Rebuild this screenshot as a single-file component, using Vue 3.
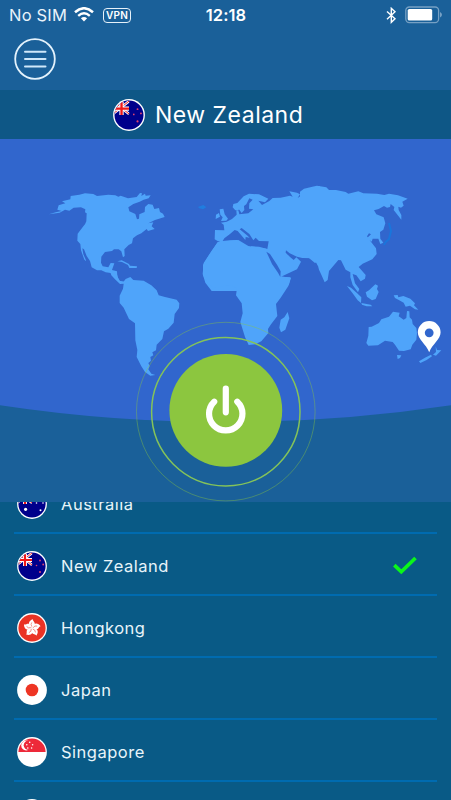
<script setup>
const countries = [
  { name: 'Australia', flag: 'au' },
  { name: 'New Zealand', flag: 'nz', selected: true },
  { name: 'Hongkong', flag: 'hk' },
  { name: 'Japan', flag: 'jp' },
  { name: 'Singapore', flag: 'sg' },
  { name: '', flag: 'none' }
]
const petals = [0, 72, 144, 216, 288]
</script>

<template>
  <svg class="defs" width="0" height="0">
    <defs>
      <clipPath id="disc"><circle cx="15" cy="15" r="13.6" /></clipPath>
      <g id="union">
        <rect width="15" height="14" fill="#00008b" />
        <path d="M0 2 15 14M0 14 15 2" stroke="#fff" stroke-width="2.4" />
        <path d="M0 2 15 14M0 14 15 2" stroke="#f01818" stroke-width=".9" />
        <path d="M8 0V15M0 9H15" stroke="#fff" stroke-width="4" />
        <path d="M8 0V15M0 9H15" stroke="#f01818" stroke-width="2.2" />
      </g>
      <g id="flag-nz">
        <rect width="30" height="30" fill="#00008b" />
        <svg width="15.5" height="15.5"><use href="#union" /></svg>
        <g fill="#e0426f"><circle cx="19.5" cy="14.5" r=".8" /><circle cx="23" cy="9.5" r=".9" /><circle cx="26.2" cy="13.5" r=".9" /><circle cx="23" cy="21" r="1" /></g>
      </g>
      <g id="flag-au">
        <rect width="30" height="30" fill="#00008b" />
        <svg width="15" height="15.5"><use href="#union" /></svg>
        <g fill="#fff"><circle cx="8.6" cy="20.3" r="1.6" /><circle cx="23" cy="8" r="1" /><circle cx="19.5" cy="14" r=".8" /><circle cx="26" cy="14" r=".8" /><circle cx="23.5" cy="21.2" r="1" /></g>
      </g>
      <g id="flag-hk">
        <rect width="30" height="30" fill="#ea3325" />
        <g v-for="a in petals" :key="a" :transform="`rotate(${a} 15 15)`">
          <path d="M15 15C10 12 11.5 7.5 16 6.3C15.5 8 18.3 9 17.8 11.4C17.6 13.3 16 13.4 15 15Z" fill="#fff" />
          <path d="M15 13.8Q13.2 11.6 14.8 9.4" fill="none" stroke="#ea3325" stroke-width=".5" />
        </g>
      </g>
      <g id="flag-jp"><rect width="30" height="30" fill="#fff" /><circle cx="15" cy="15" r="6.3" fill="#ee3524" /></g>
      <g id="flag-sg">
        <rect width="30" height="30" fill="#fff" /><rect width="30" height="15" fill="#ed2939" />
        <circle cx="9.2" cy="8.5" r="5" fill="#fff" /><circle cx="11.4" cy="8.3" r="4.7" fill="#ed2939" />
        <g fill="#fff"><circle cx="12.7" cy="5.3" r=".8" /><circle cx="9.8" cy="7.7" r=".8" /><circle cx="15.6" cy="7.7" r=".8" /><circle cx="10.8" cy="11" r=".8" /><circle cx="14.6" cy="11" r=".8" /></g>
      </g>
      <g id="flag-none"><rect width="30" height="30" fill="#fff" /></g>
    </defs>
  </svg>

  <main class="app">
    <header class="top">
      <div class="status">
        <div class="side">
          <span class="carrier">No SIM</span>
          <svg class="wifi" width="20" height="15" viewBox="0 0 20 15">
            <path d="M1 5.3Q10 -2.8 19 5.3" fill="none" stroke="#fff" stroke-width="2.5" />
            <path d="M4.2 8.8Q10 3.8 15.8 8.8" fill="none" stroke="#fff" stroke-width="2.4" />
            <path d="M6.9 11.3Q10 8.8 13.1 11.3L10 14.4Z" fill="#fff" />
          </svg>
          <span class="vpn">VPN</span>
        </div>
        <span class="clock">12:18</span>
        <div class="side right">
          <svg width="11" height="17" viewBox="0 0 11 17"><path d="M1 4.5 9 11.8 5.3 15.3V1.3L9 4.8 1 12.2" fill="none" stroke="#fff" stroke-width="1.4" /></svg>
          <svg width="38" height="18" viewBox="0 0 38 18">
            <rect x=".8" y="1" width="32.8" height="15.6" rx="3.5" fill="none" stroke="#76a0c4" stroke-width="1.3" />
            <rect x="2.7" y="3" width="24.5" height="11.6" rx="1.6" fill="#fff" />
            <path d="M35 6Q37 7 37 8.8T35 11.6Z" fill="#76a0c4" />
          </svg>
        </div>
      </div>
      <button class="menu" aria-label="Menu">
        <svg width="42" height="42" viewBox="0 0 42 42" fill="none">
          <circle cx="21" cy="21" r="19.8" stroke="#e3f2fc" stroke-width="1.8" />
          <path d="M11 13.7H31.5M11 21H31.5M11 28.4H31.5" stroke="#cfe8fa" stroke-width="2" stroke-linecap="round" />
        </svg>
      </button>
    </header>

    <div class="current">
      <svg width="32" height="32" viewBox="0 0 30 30"><circle cx="15" cy="15" r="14.9" fill="#fff" /><g clip-path="url(#disc)"><use href="#flag-nz" /></g></svg>
      <h1>New Zealand</h1>
    </div>

    <section class="stage">
      <svg width="451" height="363" viewBox="0 139 451 363">
        <path d="M0 139H451V405.2Q225.5 439 0 405.2Z" fill="#3166cd" />
        <g fill="#4fa4fa">
          <g transform="translate(40 180) scale(.33333)">
            <path d="M27 103 47 97 65 93 52 89 56 76 76 70 66 64 91 58 92 48 118 44 135 40 160 42 171 48 205 44 226 46 235 50 242 47 264 55 290 51 300 39 306 40 304 48 315 41 317 47 332 46 326 55 311 59 299 65 280 72 265 82 268 94 286 102 291 118 297 116 298 103 314 96 315 81 325 72 338 74 343 87 357 84 360 96 369 101 374 111 345 120 325 130 340 127 335 139 344 147 324 153 320 147 304 160 291 166 279 175 276 190 266 195 253 208 254 228 249 232 244 214 236 208 222 208 216 213 195 216 184 230 183 248 188 259 205 262 212 249 223 250 216 270 231 274 232 290 240 303 255 305 250 310 238 307 225 292 212 279 197 277 184 271 171 271 155 262 150 243 140 228 132 208 127 205 130 223 139 243 133 239 123 211 121 192 112 182 113 161 130 139 135 133 139 124 140 100 135 97 136 88 123 82 101 83 88 92 75 89 59 98Z" />
            <path d="M232 244 245 241 267 252 270 257 291 259 290 264 268 264 264 255 246 246Z" />
          </g>
          <path transform="translate(110 260) scale(.33333)" d="M0 34 19 37 27 62 40 66 47 57 61 51 70 60 101 62 124 76 140 91 146 106 165 111 200 119 208 130 207 144 194 162 191 188 175 206 162 214 157 237 140 254 138 271 127 277 130 286 121 291 123 302 115 309 119 318 115 328 124 341 136 345 121 347 105 336 94 319 80 291 82 270 76 241 75 190 57 177 41 143 29 129 29 107 39 86 41 71 30 72 15 58 4 46Z" />
          <g transform="translate(190 180) scale(.33333)">
            <path d="M75 150 103 151 101 134 93 128 110 125 126 117 140 104 139 91 145 91 148 103 175 100 190 88 177 86 178 70 188 59 178 55 169 73 162 78 163 90 155 99 148 89 136 91 128 82 130 72 142 69 161 49 177 41 207 43 235 56 225 67 205 62 216 75 238 63 248 54 272 53 300 47 308 50 298 34 321 38 330 43 323 54 346 38 345 33 362 30 384 19 390 18V245L384 258 371 235 337 234 321 230 299 220 288 211 287 218 301 232 311 240 319 232 333 245 321 268 273 290 302 292 297 313 281 333H65L46 308 38 282 41 249 64 214 82 189 90 184 120 181 142 180 147 194 176 209 184 199 207 200 232 207 236 184 207 183 197 173 190 181 178 162 155 144 149 148 171 166 179 173 167 171 166 180 143 153 134 150 119 163 103 175 98 183 84 184 74 178Z" />
            <path d="M89 88 100 86 104 103 114 116 109 122 93 123 98 112 91 104ZM78 104 87 99 90 110 77 117Z" />
            <path d="M25 80 40 75 49 82 39 88 26 84Z" fill="#207ddf" />
          </g>
          <path transform="translate(300 180) scale(.33333)" d="M0 35 12 26 37 20 51 17 79 22 87 30 108 30 137 36 145 41 175 34 190 40 231 41 253 45 267 41 294 46 323 56 307 65 311 77 303 83 295 80 296 90 304 105 304 119 281 90 283 81 272 72 270 81 261 83 252 78 236 87 222 91 229 103 242 108 251 112 256 130 250 149 240 156 241 176 250 188 241 192 235 176 218 176 215 185 202 173 213 163 207 160 201 169 214 187 228 205 230 222 217 238 188 251 176 261 197 285 195 296 182 304 169 286 158 282 165 310 178 327 174 337 158 315 151 292 151 277 137 269 123 241 115 240 87 273 83 300 74 307 64 284 57 269 51 246 45 249 24 232 0 231Z" />
          <g transform="translate(190 240) scale(.33333)">
            <path d="M56 47 83 6 145 0 175 18 229 26 231 37 245 64 267 95 271 109 303 114 295 138 272 173 258 192 262 228 242 254 234 267 235 279 214 304 196 313 176 315 165 291 151 246 158 220 155 190 138 166 141 144 126 137 109 136 74 144 52 129 39 106 39 75Z" />
            <path d="M293 216 298 235 286 269 273 277 268 263 272 239 283 232Z" />
            <path d="M229 35 240 42 262 76 272 94 271 111 264 98 246 72Z" fill="#3166cd" />
          </g>
          <g transform="translate(320 260) scale(.33333)">
            <path d="M81 78 93 83 110 98 124 112 123 129 113 121 99 101ZM124 129 152 134 157 139 140 139 126 134ZM137 97 147 91 166 73 174 77 171 87 176 96 167 117 156 121 141 110ZM221 106 233 105 235 112 250 108 271 116 285 130 282 136 295 149 285 148 270 137 257 140 251 128 235 119 225 114Z" />
            <path d="M146 201 155 200 177 189 184 178 207 170 219 155 239 158 236 169 251 179 259 174 261 153 268 154 269 172 276 179 278 192 289 204 291 220 289 239 277 254 272 268 252 273 237 272 225 254 218 246 195 242 174 256 145 257 139 249 145 227ZM231 285 244 286 240 294 233 297Z" />
            <path d="M347 259 351 270 364 271 348 287 339 284 348 276ZM333 284 336 289 320 300 301 309 297 304 315 293Z" />
          </g>
        </g>
        <path d="M389 223L391 231 389 239Q385 242 384 245" fill="none" stroke="#1976dc" stroke-width="2" />
        <path d="M429.2 352.2C426 344 417.8 339.5 417.8 332.3A11.4 11.2 0 0 1 440.6 332.3C440.6 339.5 432.4 344 429.2 352.2ZM429.2 328.4A4.4 4.4 0 1 0 429.2 337.2A4.4 4.4 0 1 0 429.2 328.4Z" fill="#fff" fill-rule="evenodd" />
        <circle cx="225.8" cy="411.6" r="89.3" fill="none" stroke="#8ac63f" stroke-opacity=".45" stroke-width=".9" />
        <circle cx="225.8" cy="411.7" r="74.2" fill="none" stroke="#84c35a" stroke-width="1.5" />
        <circle cx="225.8" cy="410.4" r="56.4" fill="#8cc63f" />
        <path d="M214.2 401.7A16.7 16.7 0 1 0 237.3 401.7M225.8 388.7V412.3" fill="none" stroke="#fff" stroke-width="6.2" stroke-linecap="round" />
      </svg>
    </section>

    <section class="list">
      <ul>
        <li v-for="c in countries" :key="c.flag">
          <svg width="30" height="30" viewBox="0 0 30 30"><circle cx="15" cy="15" r="14.9" fill="#fff" /><g clip-path="url(#disc)"><use :href="`#flag-${c.flag}`" /></g></svg>
          <span class="name">{{ c.name }}</span>
          <svg v-if="c.selected" class="check" width="26" height="20" viewBox="0 0 26 20"><path d="M2.3 9.2 9.3 15.8 23.5 2" fill="none" stroke="#0bf51b" stroke-width="3.7" /></svg>
        </li>
      </ul>
    </section>
  </main>
</template>

<style>
body { margin: 0; overflow: hidden; }
</style>

<style scoped>
.defs { position: absolute; }
.app {
  width: 451px;
  height: 800px;
  overflow: hidden;
  display: flex;
  flex-direction: column;
  background: #1a6099;
  color: #fff;
  font-family: Inter, "Liberation Sans", sans-serif;
}
.top { height: 90px; flex: none; }
.status {
  height: 30px;
  padding: 0 8px 0 9px;
  display: flex;
  align-items: center;
}
.side { flex: 1; display: flex; align-items: center; }
.right { justify-content: flex-end; gap: 8px; }
.carrier { font-size: 16.5px; letter-spacing: .2px; color: #e8f3fb; width: 65px; white-space: nowrap; }
.wifi { margin-top: -1px; }
.vpn {
  box-sizing: border-box;
  width: 28px;
  height: 15px;
  margin-left: 9px;
  border: 1.3px solid #e6f1f9;
  border-radius: 4px;
  font-size: 10px;
  line-height: 13px;
  font-weight: 600;
  text-align: center;
  letter-spacing: .2px;
}
.clock { font-size: 16.5px; font-weight: 600; letter-spacing: .1px; }
.menu { display: block; margin: 8px 0 0 14px; padding: 0; border: 0; background: none; line-height: 0; }
.current {
  height: 49px;
  flex: none;
  box-sizing: border-box;
  padding-left: 113px;
  display: flex;
  align-items: center;
  gap: 10px;
  background: #0e5786;
}
h1 { margin: 1px 0 0; font-size: 23px; font-weight: 400; letter-spacing: .5px; white-space: nowrap; }
.stage { height: 363px; flex: none; line-height: 0; }
.list { flex: 1; overflow: hidden; background: #095a86; }
ul { list-style: none; margin: -30px 14px 0; padding: 0; }
li {
  height: 62px;
  box-sizing: border-box;
  padding: 3px 19px 0 3px;
  display: flex;
  align-items: center;
  border-bottom: 2px solid #006bb0;
}
.name { margin-left: 14px; font-size: 16.5px; letter-spacing: .5px; color: #e8f4fa; }
.check { margin-left: auto; }
</style>
